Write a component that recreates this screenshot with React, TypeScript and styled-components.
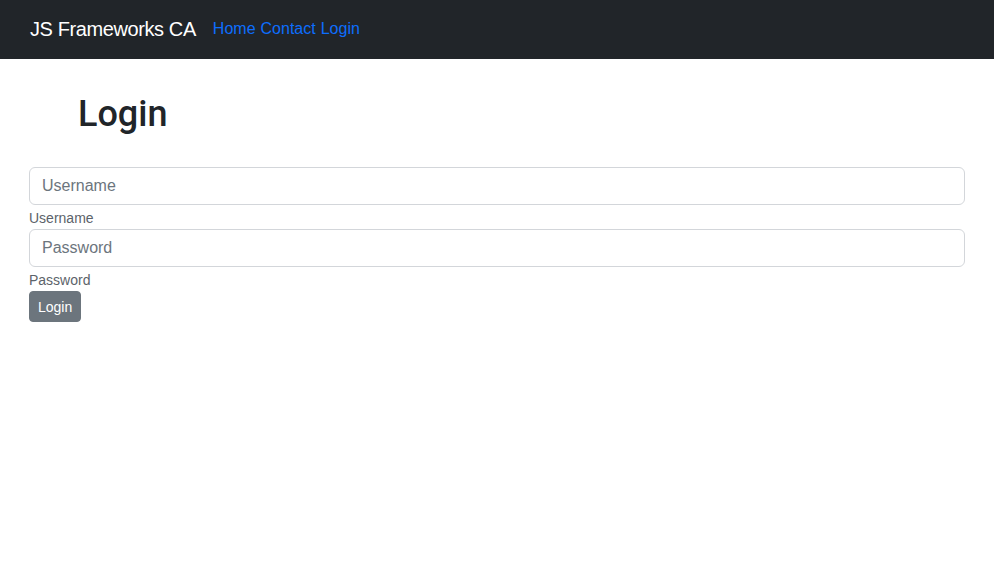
import React from "react";
import styled, { createGlobalStyle } from "styled-components";

const Global = createGlobalStyle`
  html, body { margin: 0; padding: 0; background: #fff; }
  body {
    font-family: "Liberation Sans", Arial, sans-serif;
    color: #212529;
    -webkit-font-smoothing: antialiased;
  }
  * { box-sizing: border-box; }
`;

const Navbar = styled.nav`
  height: 59px;
  background: #212529;
  display: flex;
  align-items: center;
  padding: 0 30px;
`;

const Brand = styled.a`
  color: #fff;
  font-size: 20px;
  line-height: 30px;
  letter-spacing: -0.4px;
  margin-right: 17px;
  margin-top: -2px;
  text-decoration: none;
`;

const NavLinks = styled.div`
  display: flex;
  gap: 5px;
  margin-top: -2px;
`;

const NavLink = styled.a`
  color: #0d6efd;
  font-size: 16px;
  line-height: 24px;
  text-decoration: none;
`;

const Main = styled.main`
  padding: 0 29px;
`;

const Title = styled.h1`
  font-family: Roboto, "Liberation Sans", Arial, sans-serif;
  font-size: 36px;
  font-weight: 500;
  line-height: 48px;
  margin: 31px 0 29px 49px;
`;

const Form = styled.form`
  display: flex;
  flex-direction: column;
  align-items: flex-start;
`;

const Input = styled.input`
  width: 100%;
  height: 38px;
  padding: 6px 12px;
  font-size: 16px;
  font-family: inherit;
  color: #212529;
  border: 1px solid #d3d6da;
  border-radius: 6px;
  outline: none;
  &::placeholder { color: #6c757d; }
`;

const Label = styled.label`
  font-size: 14px;
  line-height: 21px;
  color: #5c636a;
  margin-top: 3px;
`;

const Button = styled.button`
  height: 31px;
  padding: 0 8px;
  font-size: 14px;
  font-family: inherit;
  color: #fff;
  background: #6c757d;
  border: 1px solid #6c757d;
  border-radius: 4px;
`;

export default function App() {
  return (
    <>
      <Global />
      <Navbar>
        <Brand>JS Frameworks CA</Brand>
        <NavLinks>
          <NavLink>Home</NavLink>
          <NavLink>Contact</NavLink>
          <NavLink>Login</NavLink>
        </NavLinks>
      </Navbar>
      <Main>
        <Title>Login</Title>
        <Form onSubmit={(e) => e.preventDefault()}>
          <Input id="username" placeholder="Username" />
          <Label htmlFor="username">Username</Label>
          <Input id="password" type="password" placeholder="Password" />
          <Label htmlFor="password">Password</Label>
          <Button type="submit">Login</Button>
        </Form>
      </Main>
    </>
  );
}
